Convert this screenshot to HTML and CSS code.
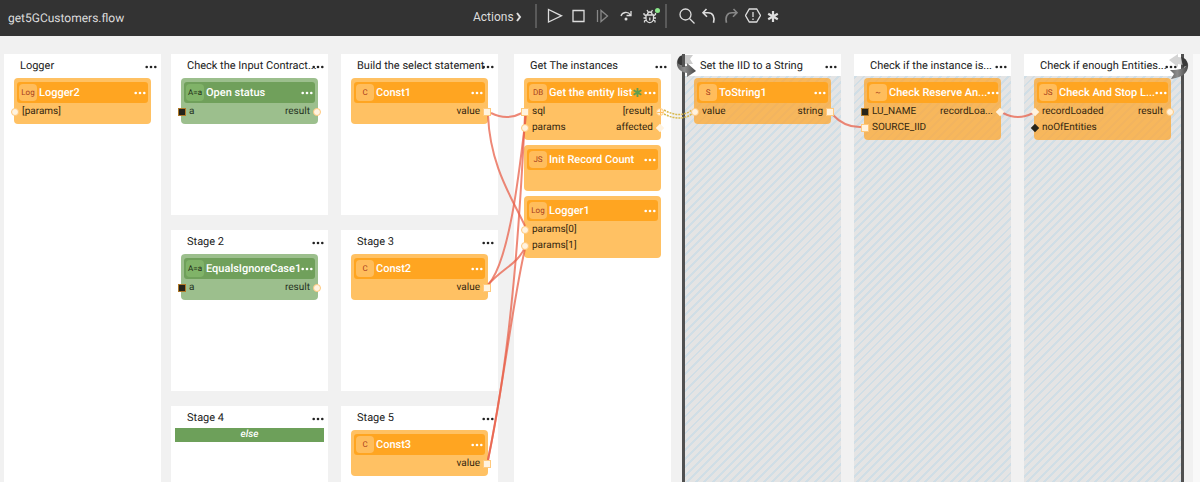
FILE: index.html
```html
<!DOCTYPE html>
<html lang="en">
<head>
<meta charset="utf-8">
<title>get5GCustomers.flow</title>
<meta name="viewport" content="width=device-width, initial-scale=1">
<link rel="stylesheet" href="styles.css">
</head>
<body>
<svg class="defs" aria-hidden="true">
  <symbol id="dots" viewBox="0 0 12 4"><circle cx="1.7" cy="2" r="1.3"/><circle cx="6" cy="2" r="1.3"/><circle cx="10.3" cy="2" r="1.3"/></symbol>
</svg>
<header class="toolbar">
  <h1 class="file-name">get5GCustomers.flow</h1>
  <nav class="tools" aria-label="Flow tools">
    <button class="actions">Actions <svg width="6" height="10" viewBox="0 0 6 10"><path d="M1 1l3 4-3 4" fill="none" stroke="currentColor" stroke-width="2"/></svg></button>
    <div class="group run">
      <button aria-label="Run"><svg viewBox="0 0 16 16"><path d="M1.500 1.500v12.500L14.500 7.800z"/></svg></button>
      <button aria-label="Stop"><svg viewBox="0 0 16 16"><path d="M2 2.500h11v11h-11z"/></svg></button>
      <button aria-label="Resume" disabled><svg viewBox="0 0 16 16"><path d="M2.500 2v12M6 2.500v11L12.500 8z"/></svg></button>
      <button aria-label="Step over"><svg viewBox="0 0 16 16"><path d="M2 8C3 4 9 3 11.500 7M12 3v4.500H7.500"/><circle cx="7" cy="11" r="1.500" fill="currentColor" stroke="none"/></svg></button>
      <button aria-label="Debug" class="debug"><svg viewBox="0 0 16 16"><path d="M3 7h7.500v3.500a3.700 4 0 0 1-7.500 0zM4.500 7a2.300 3 0 0 1 4.600 0M4 2l1.500 2.500M9.500 2L8 4.500M3 8L1 6.500V5M10.500 8l2-1.500V5M3 10H.500M10.500 10H13M3.500 12L1.500 13v1.500M10 12l2 1v1.500M6.800 9.500v3"/></svg><span class="live"></span></button>
    </div>
    <div class="group edit">
      <button aria-label="Search"><svg viewBox="0 0 16 16"><circle cx="6.500" cy="6.500" r="5.500"/><path d="M10.500 10.500l5 5"/></svg></button>
      <button aria-label="Undo"><svg viewBox="0 0 16 16"><path d="M5.500 1L2 4.800l4 4M2 4.800h5c5 0 7 4 5.500 10" stroke-width="1.600"/></svg></button>
      <button aria-label="Redo" disabled><svg viewBox="0 0 16 16"><path d="M10.500 1L14 4.800l-4 4M14 4.800H9c-5 0-7 4-5.500 10" stroke-width="1.600"/></svg></button>
      <button aria-label="Warnings"><svg viewBox="0 0 16 16"><path d="M4.300 1h7.400L15.500 7.500 11.700 14H4.300L.5 7.500zM8 4v5M8 10.500v1.500"/></svg></button>
      <button aria-label="Breakpoints"><svg viewBox="0 0 16 16"><path d="M6 3v11M1.200 5.700l9.600 5.600M10.800 5.700l-9.600 5.600" stroke-width="2.200"/></svg></button>
    </div>
  </nav>
</header>
<main class="canvas">
  <div class="column">
    <section class="stage">
      <header class="stage-head"><h2>Logger</h2><button aria-label="Stage menu"><svg><use href="#dots"/></svg></button></header>
      <div class="nodes">
        <article class="node">
          <header class="node-head"><span class="badge">Log</span><h3>Logger2</h3><button aria-label="Node menu"><svg><use href="#dots"/></svg></button></header>
          <div class="ports"><span class="port"><i class="round"></i>[params]</span></div>
        </article>
      </div>
    </section>
  </div>
  <div class="column second">
    <section class="stage">
      <header class="stage-head"><h2>Check the Input Contract...</h2><button aria-label="Stage menu"><svg><use href="#dots"/></svg></button></header>
      <div class="nodes">
        <article class="node green">
          <header class="node-head"><span class="badge">A=a</span><h3>Open status</h3><button aria-label="Node menu"><svg><use href="#dots"/></svg></button></header>
          <div class="ports"><span class="port"><i class="square dark"></i>a</span><span class="port">result<i class="round"></i></span></div>
        </article>
      </div>
    </section>
    <section class="stage">
      <header class="stage-head"><h2>Stage 2</h2><button aria-label="Stage menu"><svg><use href="#dots"/></svg></button></header>
      <div class="nodes">
        <article class="node green">
          <header class="node-head"><span class="badge">A=a</span><h3>EqualsIgnoreCase1</h3><button aria-label="Node menu"><svg><use href="#dots"/></svg></button></header>
          <div class="ports"><span class="port"><i class="square dark"></i>a</span><span class="port">result<i class="round"></i></span></div>
        </article>
      </div>
    </section>
    <section class="stage">
      <header class="stage-head"><h2>Stage 4</h2><button aria-label="Stage menu"><svg><use href="#dots"/></svg></button></header>
      <p class="else">else</p>
    </section>
  </div>
  <div class="column third">
    <section class="stage">
      <header class="stage-head"><h2>Build the select statement</h2><button aria-label="Stage menu"><svg><use href="#dots"/></svg></button></header>
      <div class="nodes">
        <article class="node">
          <header class="node-head"><span class="badge">C</span><h3>Const1</h3><button aria-label="Node menu"><svg><use href="#dots"/></svg></button></header>
          <div class="ports"><span class="port out">value<i class="square"></i></span></div>
        </article>
      </div>
    </section>
    <section class="stage">
      <header class="stage-head"><h2>Stage 3</h2><button aria-label="Stage menu"><svg><use href="#dots"/></svg></button></header>
      <div class="nodes">
        <article class="node">
          <header class="node-head"><span class="badge">C</span><h3>Const2</h3><button aria-label="Node menu"><svg><use href="#dots"/></svg></button></header>
          <div class="ports"><span class="port out">value<i class="square"></i></span></div>
        </article>
      </div>
    </section>
    <section class="stage">
      <header class="stage-head"><h2>Stage 5</h2><button aria-label="Stage menu"><svg><use href="#dots"/></svg></button></header>
      <div class="nodes">
        <article class="node">
          <header class="node-head"><span class="badge">C</span><h3>Const3</h3><button aria-label="Node menu"><svg><use href="#dots"/></svg></button></header>
          <div class="ports"><span class="port out">value<i class="square"></i></span></div>
        </article>
      </div>
    </section>
  </div>
  <div class="column fourth">
    <section class="stage">
      <header class="stage-head"><h2>Get The instances</h2><button aria-label="Stage menu"><svg><use href="#dots"/></svg></button></header>
      <div class="nodes">
        <article class="node">
          <header class="node-head"><span class="badge">DB</span><h3>Get the entity list</h3><svg class="star" viewBox="0 0 10 10"><path d="M5 0v10M.7 2.500l8.600 5M9.300 2.500l-8.600 5"/></svg><button aria-label="Node menu"><svg><use href="#dots"/></svg></button></header>
          <div class="ports"><span class="port"><i class="square"></i>sql</span><span class="port">[result]<i class="round plus"></i></span></div>
          <div class="ports"><span class="port"><i class="round"></i>params</span><span class="port">affected<i class="diamond"></i></span></div>
        </article>
        <article class="node">
          <header class="node-head"><span class="badge">JS</span><h3>Init Record Count</h3><button aria-label="Node menu"><svg><use href="#dots"/></svg></button></header>
          <div class="ports"></div>
        </article>
        <article class="node">
          <header class="node-head"><span class="badge">Log</span><h3>Logger1</h3><button aria-label="Node menu"><svg><use href="#dots"/></svg></button></header>
          <div class="ports"><span class="port"><i class="round"></i>params[0]</span></div>
          <div class="ports"><span class="port"><i class="round"></i>params[1]</span></div>
        </article>
      </div>
    </section>
  </div>
  <div class="column loop loop-start">
    <section class="stage">
      <header class="stage-head"><h2>Set the IID to a String</h2><button aria-label="Stage menu"><svg><use href="#dots"/></svg></button></header>
      <div class="nodes">
        <article class="node">
          <header class="node-head"><span class="badge">S</span><h3>ToString1</h3><button aria-label="Node menu"><svg><use href="#dots"/></svg></button></header>
          <div class="ports"><span class="port"><i class="round"></i>value</span><span class="port">string<i class="square"></i></span></div>
        </article>
      </div>
    </section>
    <svg class="turn" viewBox="0 0 24 30" aria-hidden="true"><path d="M10 5h8l-3 4 3 5h-8z" fill="#ccc"/><path d="M9 5C4 5 2 9 2 14l8 3z" fill="#383838"/><path d="M2 11c1 4 4 5 10 5v-3l9 8-9 6v-4C5 22 1 18 2 11z" fill="url(#steel)"/><path d="M7 4h3v13H7z" fill="#555"/></svg>
  </div>
  <div class="column loop">
    <section class="stage">
      <header class="stage-head"><h2>Check if the instance is...</h2><button aria-label="Stage menu"><svg><use href="#dots"/></svg></button></header>
      <div class="nodes">
        <article class="node">
          <header class="node-head"><span class="badge">~</span><h3>Check Reserve An...</h3><button aria-label="Node menu"><svg><use href="#dots"/></svg></button></header>
          <div class="ports"><span class="port"><i class="square dark"></i>LU_NAME</span><span class="port">recordLoa...<i class="diamond"></i></span></div>
          <div class="ports"><span class="port"><i class="square"></i>SOURCE_IID</span></div>
        </article>
      </div>
    </section>
  </div>
  <div class="column loop loop-end">
    <section class="stage">
      <header class="stage-head"><h2>Check if enough Entities...</h2><button aria-label="Stage menu"><svg><use href="#dots"/></svg></button></header>
      <div class="nodes">
        <article class="node">
          <header class="node-head"><span class="badge">JS</span><h3>Check And Stop L...</h3><button aria-label="Node menu"><svg><use href="#dots"/></svg></button></header>
          <div class="ports"><span class="port"><i class="diamond"></i>recordLoaded</span><span class="port">result<i class="round"></i></span></div>
          <div class="ports"><span class="port"><i class="diamond dark"></i>noOfEntities</span></div>
        </article>
      </div>
    </section>
    <svg class="turn" viewBox="0 0 24 30" aria-hidden="true"><path d="M3 7l9-6v3c3 0 5 1 6 2l-1 6-5-1v3z" fill="#ccc" fill-opacity=".85"/><path d="M15 4c5 1 7 5 7 9l-5 1z" fill="#383838"/><path d="M22 10c1 8-3 14-17 16l3-5-4-4c9 0 16-1 18-7z" fill="url(#steel)"/></svg>
  </div>
  <div class="column next"></div>
  <svg class="wires" aria-hidden="true">
    <defs><linearGradient id="steel"><stop offset="0" stop-color="#666"/><stop offset=".4" stop-color="#8c8c8c"/><stop offset="1" stop-color="#484848"/></linearGradient></defs>
    <g class="wire">
      <path d="M491 77Q507 85 522 77"/>
      <path d="M488 79C490 130 512 162 525 190"/>
      <path d="M488 249C510 225 520 130 526 79"/>
      <path d="M488 249C502 232 518 229 526 209"/>
      <path d="M488 424C512 310 520 180 525 79"/>
      <path d="M488 424C505 340 515 250 526 209"/>
      <path d="M833 79Q845 92 862 91"/>
      <path d="M1003 77Q1018 85 1033 77"/>
    </g>
    <g class="loop-wire"><path d="M664 74Q680 83 692 74"/><path d="M664 78Q680 86 692 78"/></g>
  </svg>
</main>
</body>
</html>
```

FILE: styles.css
```css
* { box-sizing: border-box; }
body {
  margin: 0;
  height: 100vh;
  display: flex;
  flex-direction: column;
  background: #f1f1f1;
  color: #222;
  font: 11px/16px Roboto, sans-serif;
  text-rendering: geometricPrecision;
  overflow: hidden;
}
h1, h2, h3, p { margin: 0; font-weight: 400; }
button {
  padding: 0;
  border: 0;
  background: none;
  color: inherit;
  font: inherit;
  display: flex;
  align-items: center;
}
.defs { position: absolute; width: 0; height: 0; }

.toolbar {
  display: grid;
  grid-template-columns: 465px 1fr;
  align-items: center;
  flex: none;
  height: 36px;
  padding: 0 8px;
  background: #333;
  color: #ddd;
}
.file-name { font-size: 12px; }
.tools { display: flex; align-items: center; height: 100%; padding-bottom: 4px; }
.actions { gap: 2px; width: 62px; padding-top: 2px; font-size: 11px; }
.group {
  display: flex;
  align-items: center;
  height: 24px;
  border-left: 2px solid #5a5a5a;
}
.run { gap: 8px; padding-left: 10px; width: 130px; }
.edit { gap: 6px; padding-left: 12px; }
.group svg {
  width: 16px;
  height: 16px;
  fill: none;
  stroke: currentColor;
  stroke-width: 1.3;
}
.group button:disabled { color: #888; }
.debug { position: relative; }
.live {
  position: absolute;
  top: 0;
  right: -1px;
  width: 5px;
  height: 5px;
  border-radius: 50%;
  background: #8ae68a;
}
.actions { font-size: 12px; }

.canvas {
  position: relative;
  flex: 1;
  min-height: 0;
  display: flex;
  gap: 13px;
  padding: 18px 0 0 4px;
  overflow: hidden;
}
.column {
  position: relative;
  flex: none;
  width: 157px;
  display: flex;
  flex-direction: column;
  gap: 15px;
}
.second { margin-left: -3px; }
.fourth { margin-left: 3px; }
.next { flex: 1; width: auto; margin-left: -1px; background: #f9f9f9; }
.stage { flex: none; height: 161px; background: #fff; }
.stage:last-child, .loop .stage, .column > .stage:only-child { flex: 1; height: auto; }
.stage-head {
  display: flex;
  align-items: center;
  justify-content: space-between;
  height: 22px;
  padding: 2px 4px 0 16px;
}
.stage-head h2 { width: 125px; font-size: 11px; white-space: nowrap; }
.stage-head button { padding-top: 2px; }
.stage-head button svg, .node-head button svg { width: 12px; height: 4px; fill: currentColor; }
.nodes { display: flex; flex-direction: column; gap: 5px; padding: 2px 10px; }
.node {
  padding: 4px 3px;
  border-radius: 4px;
  background: #ffc163;
}
.node-head {
  display: flex;
  align-items: center;
  height: 21px;
  margin-bottom: 1px;
  padding: 0 2px;
  border-radius: 3px;
  background: #ffa521;
  color: #fff;
}
.node-head h3 { flex: 1; font-size: 11px; font-weight: 500; white-space: nowrap; }
.badge {
  flex: none;
  width: 18px;
  margin-right: 2px;
  border-radius: 4px;
  background: #ffbd5c;
  color: #a83e20;
  font-size: 8px;
  line-height: 17px;
  text-align: center;
}
.star { width: 9px; height: 9px; margin-right: 2px; stroke: #5f9e4f; stroke-width: 2; }
.ports {
  display: flex;
  justify-content: space-between;
  height: 16px;
  margin: 0 -6px;
  color: #33260f;
  font-size: 10px;
}
.port { display: flex; align-items: center; gap: 3px; }
.out { margin-left: auto; }
.port i {
  position: relative;
  z-index: 2;
  width: 8px;
  height: 8px;
  background: #fff3e0;
  border: 1px solid #ffc97d;
}
.port .round { border-radius: 50%; }
.port .diamond { width: 6px; height: 6px; margin: 1px; border: 0; transform: rotate(45deg); }
.port .dark { background: #26241a; }
.port .square.dark { border-color: #b07a2a; }
.port .plus {
  background: linear-gradient(#ffc163, #ffc163) center / 1px 100% no-repeat,
    linear-gradient(#ffc163, #ffc163) center / 100% 1px no-repeat, #fff3e0;
}
.green { background: #9cbf8d; }
.green .node-head { background: #70a05b; }
.green .badge { background: #80b368; color: #1f2f17; }
.green .ports { color: #26331f; }
.else {
  margin: 0 4px;
  background: #6da05a;
  color: #fff;
  font-size: 10px;
  font-style: italic;
  font-weight: 500;
  line-height: 14px;
  text-align: center;
}

.loop .stage {
  background: repeating-linear-gradient(135deg, #e4e4e4 0 4px, #d0dee6 4px 6px);
}
.loop .stage-head { background: #fff; }
.loop .node {
  background: repeating-linear-gradient(135deg, #f7b75c 0 4px, #f2b45f 4px 6px);
}
.loop-start::before, .loop-end::before {
  content: "";
  position: absolute;
  top: 0;
  bottom: 0;
  width: 3px;
  background: #505050;
}
.loop-start::before { left: -2px; }
.loop-end::before { right: -3px; }
.turn { position: absolute; width: 24px; height: 30px; }
.loop-start .turn { left: -9px; top: -4px; }
.loop-end .turn { right: -9px; top: -1px; }

.wires {
  position: absolute;
  inset: 0;
  width: 100%;
  height: 100%;
  fill: none;
  pointer-events: none;
}
.wire { stroke: #e8604a; stroke-opacity: .75; stroke-width: 2; }
.loop-wire { stroke: #d8b94e; stroke-width: 1.5; stroke-dasharray: 2 1; }
```
